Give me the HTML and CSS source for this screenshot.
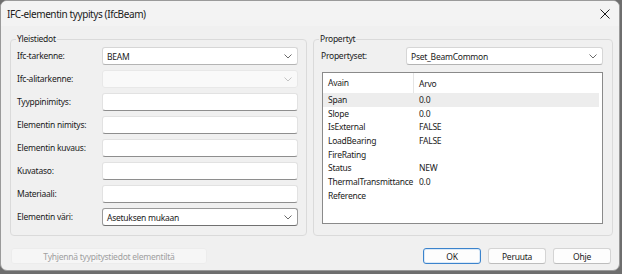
FILE: index.html
```html
<!DOCTYPE html>
<html lang="fi">
<head>
    <meta charset="UTF-8">
    <title>IFC-elementin tyypitys</title>
    <link rel="stylesheet" href="styles.css">
</head>
<body>

    <div class="window">
        <!-- Title bar -->
        <div class="titlebar">
            <span class="title">IFC-elementin tyypitys (IfcBeam)</span>
            <svg class="close" width="10" height="10" viewBox="0 0 10 10">
                <path d="M0.5 0.5 L9.5 9.5 M9.5 0.5 L0.5 9.5" stroke="#1a1a1a" stroke-width="1" fill="none"/>
            </svg>
        </div>

        <div class="content">
            <div class="columns">
                <!-- General -->
                <div class="group group-left">
                    <span class="group-title">Yleistiedot</span>
                    <div class="form">
                        <label>Ifc-tarkenne:</label>
                        <div class="combo"><span>BEAM</span><svg class="chev" width="8" height="5" viewBox="0 0 8 5"><path d="M0.5 0.5 L4 4 L7.5 0.5" stroke="#6b6b6b" fill="none"/></svg></div>

                        <label>Ifc-alitarkenne:</label>
                        <div class="combo disabled"><span></span><svg class="chev" width="8" height="5" viewBox="0 0 8 5"><path d="M0.5 0.5 L4 4 L7.5 0.5" stroke="#c4c4c4" fill="none"/></svg></div>

                        <label>Tyyppinimitys:</label>
                        <div class="input"></div>

                        <label>Elementin nimitys:</label>
                        <div class="input"></div>

                        <label>Elementin kuvaus:</label>
                        <div class="input"></div>

                        <label>Kuvataso:</label>
                        <div class="input"></div>

                        <label>Materiaali:</label>
                        <div class="input"></div>

                        <label>Elementin väri:</label>
                        <div class="combo dark"><span>Asetuksen mukaan</span><svg class="chev" width="8" height="5" viewBox="0 0 8 5"><path d="M0.5 0.5 L4 4 L7.5 0.5" stroke="#6b6b6b" fill="none"/></svg></div>
                    </div>
                </div>

                <!-- Properties -->
                <div class="group group-right">
                    <span class="group-title">Propertyt</span>
                    <div class="pset-row">
                        <label>Propertyset:</label>
                        <div class="combo"><span>Pset_BeamCommon</span><svg class="chev" width="8" height="5" viewBox="0 0 8 5"><path d="M0.5 0.5 L4 4 L7.5 0.5" stroke="#6b6b6b" fill="none"/></svg></div>
                    </div>
                    <div class="listbox">
                        <div class="list-head">
                            <div class="col-key">Avain</div>
                            <div class="col-val">Arvo</div>
                        </div>
                        <div class="list-row selected"><div class="col-key">Span</div><div class="col-val">0.0</div></div>
                        <div class="list-row"><div class="col-key">Slope</div><div class="col-val">0.0</div></div>
                        <div class="list-row"><div class="col-key">IsExternal</div><div class="col-val">FALSE</div></div>
                        <div class="list-row"><div class="col-key">LoadBearing</div><div class="col-val">FALSE</div></div>
                        <div class="list-row"><div class="col-key">FireRating</div><div class="col-val"></div></div>
                        <div class="list-row"><div class="col-key">Status</div><div class="col-val">NEW</div></div>
                        <div class="list-row"><div class="col-key">ThermalTransmittance</div><div class="col-val">0.0</div></div>
                        <div class="list-row"><div class="col-key">Reference</div><div class="col-val"></div></div>
                    </div>
                </div>
            </div>

            <!-- Bottom buttons -->
            <div class="footer">
                <button class="btn-clear" disabled>Tyhjennä tyypitystiedot elementiltä</button>
                <div class="dialog-buttons">
                    <button class="btn default">OK</button>
                    <button class="btn">Peruuta</button>
                    <button class="btn">Ohje</button>
                </div>
            </div>
        </div>
    </div>

</body>
</html>
```

FILE: styles.css
```css
* {
    margin: 0;
    padding: 0;
    box-sizing: border-box;
    font-family: "Noto Sans", "Open Sans", sans-serif;
}

body {
    background: #6e6e6e;
    width: 622px;
    height: 274px;
    overflow: hidden;
}

/* Window frame */
.window {
    width: 620px;
    height: 271px;
    background: #f0f0f0;
    border: 1px solid #9a9a9a;
    border-radius: 7px;
    overflow: hidden;
    color: #1a1a1a;
    font-size: 8.5px;
    letter-spacing: -0.25px;
}

.titlebar {
    height: 25px;
    background: #f3f3f3;
    display: flex;
    align-items: center;
    justify-content: space-between;
    padding: 0 9px 0 6px;
}

.title {
    font-size: 10px;
    letter-spacing: -0.4px;
    color: #1a1a1a;
}

.close {
    display: block;
}

/* Main area */
.content {
    padding: 13px 0 0 9px;
}

.columns {
    display: flex;
    gap: 6px;
}

.group {
    position: relative;
    border: 1px solid #dadada;
    border-radius: 4px;
    height: 197px;
}

.group-title {
    position: absolute;
    top: -7px;
    left: 5px;
    padding: 0 1px;
    background: #f0f0f0;
    line-height: 12px;
}

.group-left {
    width: 297px;
    padding: 7px 8px 0 6px;
}

.group-right {
    width: 300px;
    padding: 7px 9px 0 7px;
}

label {
    line-height: 18px;
}

.form {
    display: grid;
    grid-template-columns: 85px 196px;
    grid-auto-rows: 18px;
    row-gap: 5px;
    align-items: center;
}

/* Inputs */
.input,
.combo {
    height: 18px;
    background: #fff;
    border: 1px solid #e2e2e2;
    border-bottom-color: #8e8e8e;
    border-radius: 3px;
}

.combo {
    display: flex;
    align-items: center;
    justify-content: space-between;
    padding: 0 5px 0 4px;
    border-color: #d6d6d6;
    border-bottom-color: #b4b4b4;
}

.combo.dark {
    border-color: #9a9a9a;
    border-bottom-color: #707070;
}

.combo.disabled {
    background: #f9f9f9;
    border-color: #e8e8e8;
}

.chev {
    display: block;
}

/* Property set */
.pset-row {
    display: flex;
    align-items: center;
    justify-content: space-between;
    height: 18px;
}

.pset-row .combo {
    width: 197px;
}

.listbox {
    margin: 7px 0 0 1px;
    height: 152px;
    background: #fff;
    border: 1px solid #8a8a8a;
    padding: 0 3px 0 0;
}

.list-head {
    display: flex;
    height: 20px;
    align-items: center;
}

.list-head .col-key {
    border-right: 1px solid #e5e5e5;
    height: 20px;
    line-height: 20px;
}

.list-row {
    display: flex;
    height: 13.67px;
    line-height: 13.67px;
}

.list-row.selected {
    background: #ededed;
}

.col-key {
    width: 91px;
    padding-left: 5px;
    white-space: nowrap;
}

.col-val {
    padding-left: 5px;
}

/* Footer buttons */
.footer {
    display: flex;
    justify-content: space-between;
    align-items: center;
    margin-top: 12px;
    padding-right: 8px;
}

button {
    font-family: "Noto Sans", "Open Sans", sans-serif;
    font-size: 8.5px;
    letter-spacing: -0.25px;
    height: 16px;
    border-radius: 3px;
    color: #1a1a1a;
}

.btn-clear {
    width: 196px;
    margin-left: 1px;
    background: #f6f6f6;
    border: 1px solid #ececec;
    color: #a0a0a0;
}

.dialog-buttons {
    display: flex;
    gap: 7px;
}

.btn {
    width: 58px;
    background: #fdfdfd;
    border: 1px solid #d4d4d4;
    border-bottom-color: #bdbdbd;
}

.btn.default {
    border: 1px solid #3b83cc;
    box-shadow: inset 0 0 0 1px #dbe9f7;
}
```
